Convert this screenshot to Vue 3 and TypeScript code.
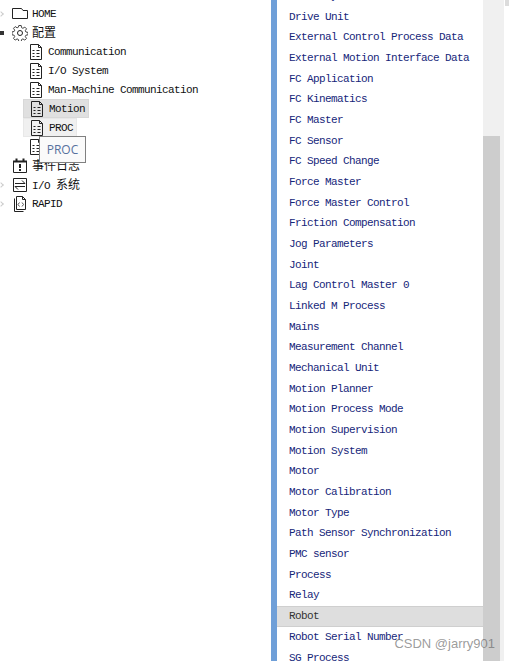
<script setup lang="ts">
interface TreeNode {
  label: string
  icon: string
  level: number
  prefix?: string
  cjk?: boolean
  arrow?: 'closed' | 'open'
  state?: string
}

const treeNodes: TreeNode[] = [
  { label: 'HOME', icon: 'folder', level: 0, arrow: 'closed' },
  { label: '配置', icon: 'gear', level: 0, arrow: 'open', cjk: true },
  { label: 'Communication', icon: 'doc', level: 1 },
  { label: 'I/O System', icon: 'doc', level: 1 },
  { label: 'Man-Machine Communication', icon: 'doc', level: 1 },
  { label: 'Motion', icon: 'doc', level: 1, state: 'selected' },
  { label: 'PROC', icon: 'doc', level: 1, state: 'hovered' },
  { label: 'Safety', icon: 'doc', level: 1 },
  { label: '事件日志', icon: 'calendar', level: 0, cjk: true },
  { label: '系统', prefix: 'I/O', icon: 'swap', level: 0, arrow: 'closed', cjk: true },
  { label: 'RAPID', icon: 'code', level: 0, arrow: 'closed' },
]

const types = [
  'Drive System', 'Drive Unit', 'External Control Process Data', 'External Motion Interface Data',
  'FC Application', 'FC Kinematics', 'FC Master', 'FC Sensor', 'FC Speed Change', 'Force Master',
  'Force Master Control', 'Friction Compensation', 'Jog Parameters', 'Joint', 'Lag Control Master 0',
  'Linked M Process', 'Mains', 'Measurement Channel', 'Mechanical Unit', 'Motion Planner',
  'Motion Process Mode', 'Motion Supervision', 'Motion System', 'Motor', 'Motor Calibration',
  'Motor Type', 'Path Sensor Synchronization', 'PMC sensor', 'Process', 'Relay', 'Robot',
  'Robot Serial Number', 'SG Process',
]
</script>

<template>
  <div class="window">
    <div class="tree-pane">
      <div
        v-for="node in treeNodes"
        :key="node.label"
        class="tree-row"
        :class="[`level-${node.level}`, node.state]"
      >
        <span v-if="node.level === 0" class="arrow" :class="node.arrow"></span>
        <svg class="icon" viewBox="0 0 16 16" fill="none" stroke="#222" stroke-width="1">
          <template v-if="node.icon === 'folder'">
            <path d="M0.5 2.500h9l1.500 2h4.500v8h-15z" />
          </template>
          <template v-else-if="node.icon === 'gear'">
            <circle cx="8" cy="8" r="2.500" />
            <path stroke="#444" d="M6.800 .5h2.400l.4 2.200 1.300.6 1.900-1.200 1.700 1.700-1.200 1.900.6 1.300 2.100.4v2.400l-2.100.4-.6 1.300 1.200 1.900-1.700 1.700-1.900-1.200-1.300.6-.4 2.200H6.800l-.4-2.200-1.300-.6-1.900 1.200-1.700-1.700 1.200-1.900-.6-1.300-2.100-.4V6.900l2.100-.4.6-1.300-1.200-1.900 1.700-1.700 1.900 1.200 1.300-.6z" />
          </template>
          <template v-else-if="node.icon === 'doc'">
            <path d="M1.500 .5h8l3 3v12h-11zM9.500 .5v3h3M3.500 6.500h2M7.500 6.500h3M3.500 9.500h2M7.500 9.500h3M3.500 12.500h2M7.500 12.500h3" />
          </template>
          <template v-else-if="node.icon === 'calendar'">
            <path d="M1.500 3.500h13v11h-13z" />
            <path d="M1 3.500h14M4.500 .5v3M11.500 .5v3" stroke-width="2" />
            <path d="M8 6v4M8 11v2" stroke-width="2" />
          </template>
          <template v-else-if="node.icon === 'swap'">
            <path d="M1.500 1.500h13v13h-13zM3 6.500h10M10 3.500l3 3M13 9.500H3M6 12.500l-3-3" />
          </template>
          <template v-else>
            <path d="M2.500 2.500v13h9M4.500 .5h6l3 3v10h-9zM10.500 .5v3h3" />
            <path d="M7.500 6.500l-1.500 2 1.500 2M10 6.500l1.500 2-1.500 2" stroke="#555" />
          </template>
        </svg>
        <span class="tree-label" :class="{ 'cjk-label': node.cjk }">
          <template v-if="node.prefix">{{ node.prefix }}&nbsp;</template><span :class="{ cjk: node.cjk }">{{ node.label }}</span>
        </span>
      </div>
      <div class="tooltip">PROC</div>
    </div>

    <div class="type-pane">
      <ul class="type-list">
        <li v-for="item in types" :key="item" :class="{ active: item === 'Robot' }">{{ item }}</li>
      </ul>
      <div class="scroll-track"><div class="scroll-thumb"></div></div>
      <span class="corner"></span>
      <span class="watermark">CSDN @jarry901</span>
    </div>
  </div>
</template>

<style scoped>
.window {
  display: flex;
  width: 509px;
  height: 661px;
  overflow: hidden;
  background: #fff;
  font-family: "Liberation Mono", "Noto Sans CJK SC", monospace;
  font-size: 11px;
  letter-spacing: -0.6px;
}

.tree-pane {
  position: relative;
  width: 271px;
  padding-top: 4px;
  box-sizing: border-box;
  color: #111;
}

.tree-row {
  display: flex;
  align-items: center;
  height: 19px;
}

.level-0 {
  padding-left: 12px;
}

.level-1 {
  width: fit-content;
  margin-left: 23px;
  padding-left: 6px;
  padding-right: 3px;
}

.tree-label {
  margin-left: 4px;
}

.cjk-label {
  padding-bottom: 3px;
}

.level-1 .tree-label {
  margin-left: 3px;
}

.cjk {
  font-family: "Noto Sans CJK SC", sans-serif;
  font-size: 12px;
  letter-spacing: 0;
}

.arrow {
  position: absolute;
  left: 0;
}

.arrow.closed {
  left: -1px;
  width: 3px;
  height: 3px;
  border-top: 1px solid #ccc;
  border-right: 1px solid #ccc;
  transform: rotate(45deg);
}

.arrow.open {
  width: 4px;
  height: 4px;
  background: #333;
}

.icon {
  width: 16px;
  height: 16px;
  flex-shrink: 0;
}

.selected {
  background: #e0e0e0;
  border: 1px solid #d8d8d8;
  box-sizing: border-box;
}

.hovered {
  background: #f0f0f0;
  border: 1px solid #e8e8e8;
  box-sizing: border-box;
}

.tooltip {
  position: absolute;
  left: 39px;
  top: 136px;
  width: 47px;
  height: 27px;
  box-sizing: border-box;
  border: 1px solid #808080;
  background: #fafafa;
  color: #57719e;
  font-family: "Open Sans", "Noto Sans", sans-serif;
  font-size: 12px;
  letter-spacing: 0;
  line-height: 25px;
  text-align: center;
}

.type-pane {
  position: relative;
  display: flex;
  flex: 1;
  min-width: 0;
  border-left: 6px solid #6f9fd8;
  overflow: hidden;
}

.type-list {
  width: 206px;
  height: 661px;
  margin: 0;
  padding: 0;
  list-style: none;
  overflow: hidden;
  color: #16267a;
}

.type-list li {
  height: 20.68px;
  padding-left: 12px;
  box-sizing: border-box;
  line-height: 20.68px;
  white-space: nowrap;
}

.type-list li:first-child {
  margin-top: -14px;
}

.type-list .active {
  background: #dedede;
  border-top: 1px solid #cfcfcf;
  border-bottom: 1px solid #cfcfcf;
  line-height: 18.68px;
  color: #333;
}

.scroll-track {
  width: 21px;
  height: 661px;
  padding-top: 136px;
  box-sizing: border-box;
  background: #f0f0f0;
}

.scroll-thumb {
  width: 17px;
  height: 525px;
  background: #cdcdcd;
}

.corner {
  position: absolute;
  right: 0;
  top: 0;
  width: 4px;
  height: 6px;
  background: #dcdcdc;
}

.watermark {
  position: absolute;
  right: 14px;
  top: 636px;
  color: rgba(100, 100, 100, 0.65);
  font-family: "Liberation Sans", sans-serif;
  font-size: 13px;
  letter-spacing: 0;
}
</style>
